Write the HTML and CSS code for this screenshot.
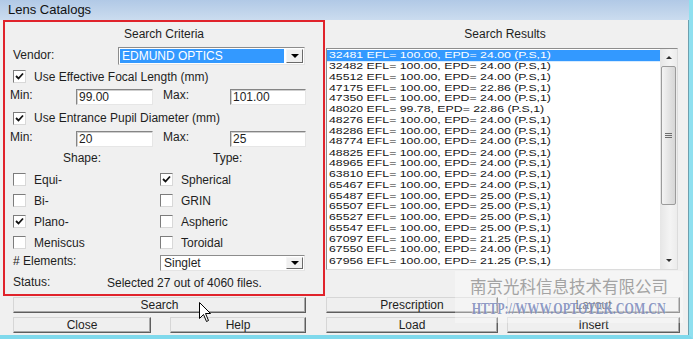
FILE: index.html
```html
<!DOCTYPE html>
<html>
<head lang="en">
    <meta charset="UTF-8">
    <title>Lens Catalogs</title>
    <link rel="stylesheet" href="styles.css">
</head>
<body>
<div class="window">
    <div class="titlebar">Lens Catalogs</div>
    <div class="client">
        <div class="left-col">
            <div class="criteria">
                <div class="group-title">Search Criteria</div>
                <div class="row row-vendor">
                    <span class="lbl-vendor">Vendor:</span>
                    <div class="combo combo-vendor">
                        <span class="combo-value selected">EDMUND OPTICS</span>
                        <span class="combo-btn"></span>
                    </div>
                </div>
                <div class="row row-check">
                    <span class="chk checked"><svg viewBox="0 0 9 9"><polyline points="1,4 3.5,6.5 8,1.5"/></svg></span>
                    <span>Use Effective Focal Length (mm)</span>
                </div>
                <div class="row row-range">
                    <span class="lbl-min">Min:</span>
                    <span class="field field-min">99.00</span>
                    <span class="lbl-max">Max:</span>
                    <span class="field field-max">101.00</span>
                </div>
                <div class="row row-check row-check2">
                    <span class="chk checked"><svg viewBox="0 0 9 9"><polyline points="1,4 3.5,6.5 8,1.5"/></svg></span>
                    <span>Use Entrance Pupil Diameter (mm)</span>
                </div>
                <div class="row row-range row-range2">
                    <span class="lbl-min">Min:</span>
                    <span class="field field-min">20</span>
                    <span class="lbl-max">Max:</span>
                    <span class="field field-max">25</span>
                </div>
                <div class="row row-heads">
                    <span class="lbl-shape">Shape:</span>
                    <span>Type:</span>
                </div>
                <div class="options">
                    <div class="opt"><span class="chk"></span><span>Equi-</span></div>
                    <div class="opt"><span class="chk checked"><svg viewBox="0 0 9 9"><polyline points="1,4 3.5,6.5 8,1.5"/></svg></span><span>Spherical</span></div>
                    <div class="opt"><span class="chk"></span><span>Bi-</span></div>
                    <div class="opt"><span class="chk"></span><span>GRIN</span></div>
                    <div class="opt"><span class="chk checked"><svg viewBox="0 0 9 9"><polyline points="1,4 3.5,6.5 8,1.5"/></svg></span><span>Plano-</span></div>
                    <div class="opt"><span class="chk"></span><span>Aspheric</span></div>
                    <div class="opt"><span class="chk"></span><span>Meniscus</span></div>
                    <div class="opt"><span class="chk"></span><span>Toroidal</span></div>
                </div>
                <div class="row row-elements">
                    <span class="lbl-elements"># Elements:</span>
                    <div class="combo combo-elements">
                        <span class="combo-value">Singlet</span>
                        <span class="combo-btn"></span>
                    </div>
                </div>
                <div class="row row-status">
                    <span class="lbl-status">Status:</span>
                    <span class="status-text">Selected 27 out of 4060 files.</span>
                </div>
            </div>
            <button class="btn btn-search">Search</button>
            <div class="btn-pair">
                <button class="btn">Close</button>
                <button class="btn">Help</button>
            </div>
        </div>
        <div class="right-col">
            <div class="group-title">Search Results</div>
            <div class="listbox">
                <div class="items-wrap">
                    <ul class="items">
                        <li class="selected">32481 EFL= 100.00, EPD= 24.00 (P.S,1)</li>
                        <li>32482 EFL= 100.00, EPD= 24.00 (P.S,1)</li>
                        <li>45512 EFL= 100.00, EPD= 24.00 (P.S,1)</li>
                        <li>47175 EFL= 100.00, EPD= 22.86 (P.S,1)</li>
                        <li>47350 EFL= 100.00, EPD= 24.00 (P.S,1)</li>
                        <li>48020 EFL= 99.78, EPD= 22.86 (P.S,1)</li>
                        <li>48276 EFL= 100.00, EPD= 24.00 (P.S,1)</li>
                        <li>48286 EFL= 100.00, EPD= 24.00 (P.S,1)</li>
                        <li>48774 EFL= 100.00, EPD= 24.00 (P.S,1)</li>
                        <li>48825 EFL= 100.00, EPD= 24.00 (P.S,1)</li>
                        <li>48965 EFL= 100.00, EPD= 24.00 (P.S,1)</li>
                        <li>63810 EFL= 100.00, EPD= 24.00 (P.S,1)</li>
                        <li>65467 EFL= 100.00, EPD= 24.00 (P.S,1)</li>
                        <li>65487 EFL= 100.00, EPD= 25.00 (P.S,1)</li>
                        <li>65507 EFL= 100.00, EPD= 25.00 (P.S,1)</li>
                        <li>65527 EFL= 100.00, EPD= 25.00 (P.S,1)</li>
                        <li>65547 EFL= 100.00, EPD= 25.00 (P.S,1)</li>
                        <li>67097 EFL= 100.00, EPD= 21.25 (P.S,1)</li>
                        <li>67550 EFL= 100.00, EPD= 24.00 (P.S,1)</li>
                        <li>67956 EFL= 100.00, EPD= 21.25 (P.S,1)</li>
                    </ul>
                </div>
                <div class="scrollbar">
                    <span class="sb-arrow sb-up"></span>
                    <span class="sb-thumb"><i></i><i></i><i></i></span>
                    <span class="sb-arrow sb-down"></span>
                </div>
            </div>
            <div class="btn-grid">
                <button class="btn">Prescription</button>
                <button class="btn">Layout</button>
                <button class="btn">Load</button>
                <button class="btn">Insert</button>
            </div>
        </div>
    </div>
    <div class="watermark">
        <div class="wm-cn">南京光科信息技术有限公司</div>
        <div class="wm-url">HTTP://WWW.OPTOTEK.COM.CN</div>
    </div>
    <svg class="cursor" viewBox="0 0 13 21"><path d="M0.5,0.5 L0.5,16.5 L4.5,12.5 L7.5,19.5 L9.5,18.5 L6.5,11.5 L11.5,11.5 Z"/></svg>
</div>
</body>
</html>
```

FILE: styles.css
```css
*{
    margin:0;
    padding:0;
    box-sizing:border-box;
}
ul,ul>li{
    list-style:none;
}
body{
    width:693px;
    height:339px;
    overflow:hidden;
    background:#f0f0f0;
    font:12px "Liberation Sans", Arial, sans-serif;
    color:#1e1e1e;
}
.window{
    position:relative;
    width:693px;
    height:339px;
    border-right:4px solid #8fe0ef;
    border-bottom:4px solid #7fd9ec;
    box-shadow:inset -1px 0 0 #6d9fae;
}
.titlebar{
    height:20px;
    line-height:20px;
    padding-left:8px;
    font-size:13px;
    color:#111;
    background:linear-gradient(#b1c9e6, #cbdcef);
}
.client{
    display:flex;
    height:315px;
}

/* left side */
.left-col{
    width:325px;
    padding-left:3px;
}
.criteria{
    width:322px;
    height:276px;
    border:2px solid #e0232b;
}
.group-title{
    height:23px;
    line-height:24px;
    text-align:center;
}
.row{
    display:flex;
    align-items:center;
}
.row-vendor{
    height:22px;
    padding-left:8px;
}
.lbl-vendor{
    width:105px;
    margin-top:-3px;
}
.combo{
    display:flex;
    background:#fff;
    padding:1px;
    border:1px solid;
    border-color:#8c8c8c #e4e4e4 #e4e4e4 #8c8c8c;
}
.combo-vendor{
    width:187px;
    height:18px;
}
.combo-value{
    flex:1;
    padding-left:2px;
    line-height:14px;
}
.combo-value.selected{
    background:#3399ff;
    color:#fff;
    margin-right:2px;
}
.combo-btn{
    width:17px;
    display:flex;
    align-items:center;
    justify-content:center;
    background:#f0f0f0;
    border:1px solid;
    border-color:#f6f6f6 #6a6a6a #6a6a6a #f6f6f6;
}
.combo-btn:after{
    content:'';
    border-left:4px solid transparent;
    border-right:4px solid transparent;
    border-top:4px solid #000;
}
.row-check{
    height:19px;
    padding-left:8px;
}
.row-check2{
    height:22px;
}
.chk{
    width:13px;
    height:13px;
    margin-right:8px;
    background:#fff;
    border:1px solid;
    border-color:#7c7c7c #d8d8d8 #d8d8d8 #7c7c7c;
    display:flex;
    align-items:center;
    justify-content:center;
}
.chk svg{
    width:9px;
    height:9px;
    fill:none;
    stroke:#111;
    stroke-width:1.8;
}
.row-range{
    height:21px;
    padding-left:5px;
}
.row-range2{
    height:19px;
}
.lbl-min{
    width:66px;
    margin-top:-3px;
}
.lbl-max{
    width:67px;
    margin-left:10px;
    margin-top:-3px;
}
.field{
    height:16px;
    line-height:14px;
    padding-left:2px;
    background:#fff;
    border:1px solid;
    border-color:#858585 #e6e6e6 #e6e6e6 #858585;
    box-shadow:inset 1px 1px 0 #cfcfcf;
}
.field-min{
    width:77px;
}
.field-max{
    width:76px;
}
.row-heads{
    height:21px;
    padding-left:58px;
    padding-bottom:2px;
}
.lbl-shape{
    width:150px;
}
.options{
    display:grid;
    grid-template-columns:147px 147px;
    grid-auto-rows:21px;
    padding-left:8px;
}
.opt{
    display:flex;
    align-items:center;
}
.row-elements{
    height:19px;
    padding-left:8px;
}
.lbl-elements{
    width:147px;
    margin-top:-3px;
}
.combo-elements{
    width:145px;
    height:16px;
}
.combo-elements .combo-value{
    line-height:12px;
}
.row-status{
    height:22px;
    padding-left:8px;
}
.lbl-status{
    width:94px;
    margin-top:-3px;
}

/* buttons */
.btn{
    display:block;
    height:16px;
    font:inherit;
    color:#1e1e1e;
    line-height:13px;
    text-align:center;
    background:#efefef;
    border:1px solid;
    border-color:#d6d6d6 #5e5e5e #5e5e5e #d6d6d6;
    box-shadow:inset -1px -1px 0 #a8a8a8;
}
.btn-search{
    width:293px;
    margin:1px 0 0 10px;
}
.btn-pair{
    display:grid;
    grid-template-columns:138px 136px;
    column-gap:19px;
    margin:4px 0 0 10px;
}

/* right side */
.right-col{
    width:360px;
    padding-top:2px;
}
.listbox{
    display:flex;
    width:352px;
    height:222px;
    margin:3px 0 0 1px;
    background:#fff;
    border:1px solid;
    border-color:#8d8d8d #dcdcdc #dcdcdc #8d8d8d;
}
.items-wrap{
    flex:1;
    padding-top:1px;
}
/* rows of the original list are squat: tight pitch, wide glyphs */
.items{
    font-size:12.3px;
    line-height:13.5px;
    color:#161616;
    transform:scaleY(.8);
    transform-origin:0 0;
}
.items li{
    height:13.5px;
    padding-left:2px;
    white-space:nowrap;
}
.items li.selected{
    background:#3399ff;
    color:#fff;
}
.scrollbar{
    width:17px;
    display:flex;
    flex-direction:column;
    background:linear-gradient(90deg, #e6e6e6, #f4f4f4 60%, #ececec);
}
.sb-arrow{
    height:17px;
    display:flex;
    align-items:center;
    justify-content:center;
}
.sb-up:after{
    content:'';
    border-left:3.5px solid transparent;
    border-right:3.5px solid transparent;
    border-bottom:3px solid #303030;
}
.sb-down{
    margin-top:auto;
}
.sb-down:after{
    content:'';
    border-left:3.5px solid transparent;
    border-right:3.5px solid transparent;
    border-top:3px solid #303030;
}
.sb-thumb{
    height:139px;
    margin:0 1px;
    border:1px solid #9b9b9b;
    border-radius:2px;
    background:linear-gradient(90deg, #f4f4f4, #e4e4e4 50%, #d6d6d6);
    display:flex;
    flex-direction:column;
    align-items:center;
    justify-content:center;
    gap:1px;
}
.sb-thumb i{
    width:7px;
    height:1px;
    background:#6e6e6e;
}
.btn-grid{
    display:grid;
    grid-template-columns:172px 173px;
    grid-auto-rows:16px;
    column-gap:9px;
    row-gap:4px;
    margin:27px 0 0 1px;
}

/* overlays */
.watermark{
    position:absolute;
    left:455px;
    top:271px;
    width:228px;
    height:52px;
    display:flex;
    flex-direction:column;
    align-items:center;
    background:rgba(255,255,255,.35);
}
.wm-cn{
    margin-top:5px;
    font:16.5px/20px "Noto Sans CJK SC", sans-serif;
    color:#a3a3a3;
}
.wm-url{
    width:max-content;
    margin-top:2px;
    font:bold 17px/22px "Liberation Serif", serif;
    color:rgba(70,90,160,.62);
    text-shadow:0 0 2px rgba(255,255,255,.9);
    transform:scaleX(.71);
}
.cursor{
    position:absolute;
    left:199px;
    top:302px;
    width:13px;
    height:21px;
}
.cursor path{
    fill:#fff;
    stroke:#000;
    stroke-width:1;
}
```
